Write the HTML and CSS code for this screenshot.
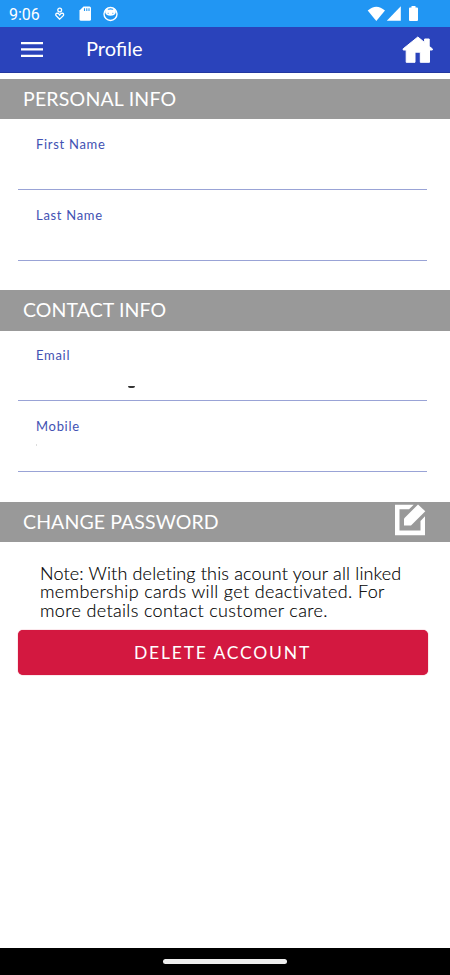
FILE: index.html
```html
<!DOCTYPE html>
<html lang="en">
<head>
<meta charset="utf-8">
<title>Profile</title>
<link rel="stylesheet" href="styles.css">
</head>
<body>
<div class="status">
  <span class="time">9:06</span>
  <svg class="ic-left" width="70" height="27" viewBox="50 0 70 27">
    <g fill="none" stroke="#fff" stroke-width="1.3">
      <circle cx="59.7" cy="10" r="1.9"/>
      <path d="M59.7 19.2 55.9 15.4Q55.3 13.3 57.2 13.2 58.6 13.3 59.7 15 60.8 13.3 62.2 13.2 64.1 13.3 63.5 15.4Z"/>
      <circle cx="110.5" cy="14" r="6.5" stroke-width="1.4"/>
    </g>
    <path fill="#fff" d="M83.5 6.5H89.5Q91 6.5 91 8V19.3Q91 20.8 89.5 20.8H81Q79.5 20.8 79.5 19.3V10.5Z"/>
    <path stroke="#2196f3" stroke-width="1.1" d="M84.5 8.3V11M86.8 8.3V11M89 8.3V11"/>
    <path fill="#fff" d="M105.2 10 106.3 8.3 108.3 9.7Q110.5 9.2 112.7 9.7L114.7 8.3 115.8 10V12.5Q114.8 15.8 110.5 15.8 106.2 15.8 105.2 12.5Z"/>
    <path stroke="#2196f3" stroke-width=".6" d="M107.5 13.3H109M112 13.3H113.5"/>
  </svg>
  <svg class="ic-right" width="55" height="27" viewBox="365 0 55 27" fill="#fff">
    <path d="M367.7 10.5Q376.3 2.8 385 10.5L376.3 21Z"/>
    <path d="M400.8 6.3V20.8H386.8Z"/>
    <path d="M411.5 6H415.5V7.5H417Q418 7.5 418 8.5V20Q418 21 417 21H410Q409 21 409 20V8.5Q409 7.5 410 7.5H411.5Z"/>
  </svg>
</div>
<header class="appbar">
  <svg width="22" height="16" viewBox="0 0 22 16" fill="#fff"><path d="M0 0H22V2.3H0ZM0 6.3H22V8.6H0ZM0 12.7H22V15H0Z"/></svg>
  <h1>Profile</h1>
  <svg class="home" width="32" height="28" viewBox="402 36 32 28"><path fill="#fff" stroke="#fff" stroke-linejoin="round" d="M417.8 37 424.6 42.5V39H429.2V46.3L432.3 48.8V50H429.5V62.3H420.3V52.2H415V62.3H406.2V50H403.2V48.8Z"/></svg>
</header>
<main>
  <h2 class="band"><span class="personal">PERSONAL INFO</span></h2>
  <div class="field"><label>First Name</label></div>
  <div class="field"><label>Last Name</label></div>
  <h2 class="band gap"><span>CONTACT INFO</span></h2>
  <div class="field"><label>Email</label><i class="dash"></i></div>
  <div class="field"><label>Mobile</label><i class="speck"></i></div>
  <h2 class="band gap"><span>CHANGE PASSWORD</span>
    <svg class="edit" width="32" height="32" viewBox="394 504 32 32" fill="#fff"><path d="M395 504.7H413.7L409 509.3H399.5V530.5H420.5V521L425 516.3V535.2H395Z"/><path d="M404 518.5 418 504.5 425.3 511.3 411 525.5H404Z"/></svg>
  </h2>
  <div class="note">
    <div class="first">Note: With deleting this acount your all linked</div>
    <div>membership cards will get deactivated. For</div>
    <div>more details contact customer care.</div>
  </div>
  <button class="delete" type="button">DELETE ACCOUNT</button>
</main>
<footer class="nav"><i></i></footer>
</body>
</html>
```
FILE: styles.css
```css
* { box-sizing: border-box; }
body {
  margin: 0;
  height: 975px;
  display: flex;
  flex-direction: column;
  background: #fff;
  font-family: Lato, "Liberation Sans", sans-serif;
  overflow: hidden;
}
svg { display: block; flex: none; }
.status {
  height: 27px;
  flex: none;
  display: flex;
  align-items: center;
  background: #2196f3;
  color: #fff;
}
.time {
  width: 50px;
  padding: 2px 0 0 9px;
  font: 16px/20px Roboto, sans-serif;
}
.ic-right { margin-left: 245px; }
.appbar {
  height: 46px;
  flex: none;
  display: flex;
  align-items: center;
  padding: 0 16px 0 21px;
  background: #2a43bb;
  border-bottom: 1px solid #2237a0;
  color: #fff;
}
h1 {
  margin: 0 0 4px 43px;
  font-size: 20px;
  font-weight: 400;
  line-height: 24px;
}
.home { margin-left: auto; }
main { flex: 1; padding-top: 6px; }
.band {
  height: 40.4px;
  margin: 0;
  padding: 0 24px 0 23px;
  display: flex;
  align-items: center;
  justify-content: space-between;
  background: #999;
  color: #fff;
  font-size: 19.5px;
  font-weight: 400;
  line-height: 24px;
  letter-spacing: .1px;
}
.band .personal { letter-spacing: .2px; }
.gap { margin-top: 29.5px; }
.edit { margin-bottom: 4px; }
.field {
  position: relative;
  height: 70.7px;
  margin: 0 23px 0 17.5px;
  padding: 16.6px 0 0 18.5px;
  border-bottom: 1px solid #99a3d6;
  color: #4252b3;
  font-size: 13px;
  line-height: 16px;
}
.field label { display: block; letter-spacing: .7px; }
.dash {
  position: absolute;
  left: 110.5px;
  top: 55px;
  width: 7px;
  height: 2px;
  border-radius: 0 0 3px 3px;
  background: #333;
}
.speck {
  position: absolute;
  left: 18.5px;
  top: 43px;
  width: 1px;
  height: 2px;
  background: #ddd;
}
.note {
  margin: 22px 0 0 40px;
  color: #000;
  font-size: 18px;
  font-weight: 300;
  line-height: 18.3px;
  letter-spacing: .35px;
  white-space: nowrap;
  -webkit-text-stroke: .15px #000;
}
.note .first { letter-spacing: .16px; }
.delete {
  display: block;
  width: 410px;
  height: 45px;
  margin: 11.2px 0 0 17.5px;
  padding: 1px 0 0;
  border: 0;
  border-radius: 5px;
  background: #d31840;
  box-shadow: 0 0 1px #d31840;
  color: #fff;
  font: 17.5px/24px Lato, sans-serif;
  letter-spacing: 1.8px;
}
.nav {
  height: 27px;
  flex: none;
  display: flex;
  justify-content: center;
  align-items: center;
  background: #000;
}
.nav i {
  width: 124px;
  height: 5px;
  border-radius: 3px;
  background: #eee;
}
```
